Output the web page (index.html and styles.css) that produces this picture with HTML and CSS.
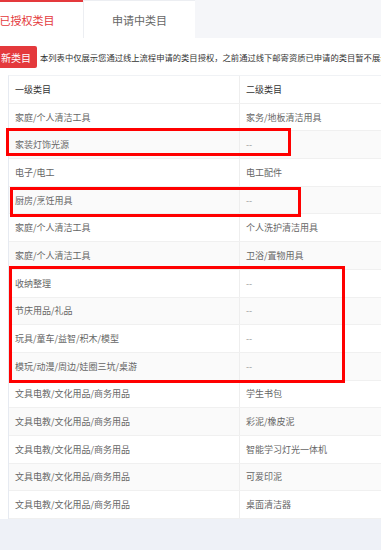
FILE: index.html
```html
<!DOCTYPE html>
<html lang="zh-CN">
<head>
<meta charset="utf-8">
<title>类目授权</title>
<link rel="stylesheet" href="styles.css">
</head>
<body>
<div class="page">
  <div class="tabs">
    <div class="tab-list">
      <div class="tab active">已授权类目</div>
      <div class="tab">申请中类目</div>
    </div>
  </div>
  <div class="panel">
    <div class="toolbar">
      <div class="btn">新类目</div>
      <div class="notice">本列表中仅展示您通过线上流程申请的类目授权，之前通过线下邮寄资质已申请的类目暂不展示</div>
    </div>
    <div class="table">
      <div class="row head"><div class="cell c1">一级类目</div><div class="cell c2">二级类目</div></div>
      <div class="row"><div class="cell c1">家庭/个人清洁工具</div><div class="cell c2">家务/地板清洁用具</div></div>
      <div class="row"><div class="cell c1">家装灯饰光源</div><div class="cell c2 empty">--</div></div>
      <div class="row"><div class="cell c1">电子/电工</div><div class="cell c2">电工配件</div></div>
      <div class="row"><div class="cell c1">厨房/烹饪用具</div><div class="cell c2 empty">--</div></div>
      <div class="row"><div class="cell c1">家庭/个人清洁工具</div><div class="cell c2">个人洗护清洁用具</div></div>
      <div class="row"><div class="cell c1">家庭/个人清洁工具</div><div class="cell c2">卫浴/置物用具</div></div>
      <div class="row"><div class="cell c1">收纳整理</div><div class="cell c2 empty">--</div></div>
      <div class="row"><div class="cell c1">节庆用品/礼品</div><div class="cell c2 empty">--</div></div>
      <div class="row"><div class="cell c1">玩具/童车/益智/积木/模型</div><div class="cell c2 empty">--</div></div>
      <div class="row"><div class="cell c1">模玩/动漫/周边/娃圈三坑/桌游</div><div class="cell c2 empty">--</div></div>
      <div class="row"><div class="cell c1">文具电教/文化用品/商务用品</div><div class="cell c2">学生书包</div></div>
      <div class="row"><div class="cell c1">文具电教/文化用品/商务用品</div><div class="cell c2">彩泥/橡皮泥</div></div>
      <div class="row"><div class="cell c1">文具电教/文化用品/商务用品</div><div class="cell c2">智能学习灯光一体机</div></div>
      <div class="row"><div class="cell c1">文具电教/文化用品/商务用品</div><div class="cell c2">可爱印泥</div></div>
      <div class="row"><div class="cell c1">文具电教/文化用品/商务用品</div><div class="cell c2">桌面清洁器</div></div>
    </div>
  </div>
  <div class="mark mark-1"></div>
  <div class="mark mark-2"></div>
  <div class="mark mark-3"></div>
</div>
</body>
</html>
```

FILE: styles.css
```css
html, body {
  margin: 0;
  padding: 0;
  background: #eef1f7;
  font-family: "Noto Sans CJK SC", "Noto Sans", sans-serif;
}

.page {
  position: relative;
  width: 381px;
  height: 550px;
  overflow: hidden;
}

.tabs {
  height: 38px;
  background: #f5f6f9;
  display: flex;
}

.tab-list {
  display: flex;
  margin-left: -29px;
}

.tab {
  width: 112px;
  height: 38px;
  box-sizing: border-box;
  display: flex;
  align-items: center;
  justify-content: center;
  background: #fff;
  color: #666;
  font-size: 11px;
  border-top: 1px solid #eceef2;
  border-left: 1px solid #eceef2;
}

.tab.active {
  color: #e4393c;
  border-top: 2px solid #e4393c;
  border-left: none;
}

.panel {
  background: #fff;
  padding-top: 8px;
}

.toolbar {
  display: flex;
  align-items: center;
  height: 22px;
  gap: 3px;
}

.btn {
  flex: 0 0 37px;
  width: 37px;
  height: 22px;
  box-sizing: border-box;
  background: #e4393c;
  color: #fff;
  font-size: 10px;
  display: flex;
  align-items: center;
  justify-content: flex-end;
  padding-right: 6px;
  border-radius: 0 2px 2px 0;
  white-space: nowrap;
}

.notice {
  flex: 1 1 auto;
  min-width: 0;
  overflow: hidden;
  font-size: 8.3px;
  color: #333;
  white-space: nowrap;
}

.table {
  margin-top: 7px;
  margin-left: 8px;
  width: 420px;
  border-left: 1px solid #e6eaf1;
  border-top: 1px solid #f0f2f5;
}

.row {
  display: grid;
  grid-template-columns: 231px 1fr;
  height: 27.7px;
  box-sizing: border-box;
  border-bottom: 1px solid #f0f0f0;
  background: #fff;
}

.row:nth-child(odd):not(.head) {
  background: #fafafa;
}

.cell {
  display: flex;
  align-items: center;
  font-size: 9px;
  color: #666;
  white-space: nowrap;
}

.c1 {
  padding-left: 6px;
  border-right: 1px solid #eeeeee;
}

.c2 {
  padding-left: 6px;
}

.head .cell {
  color: #333;
}

.empty {
  color: #999;
}

.mark {
  position: absolute;
  border: 3px solid #f00;
  box-sizing: border-box;
}

.mark-1 { left: 6px; top: 128px; width: 285px; height: 28px; }
.mark-2 { left: 10px; top: 187px; width: 291px; height: 30px; }
.mark-3 { left: 9px; top: 266px; width: 336px; height: 117px; }
```
